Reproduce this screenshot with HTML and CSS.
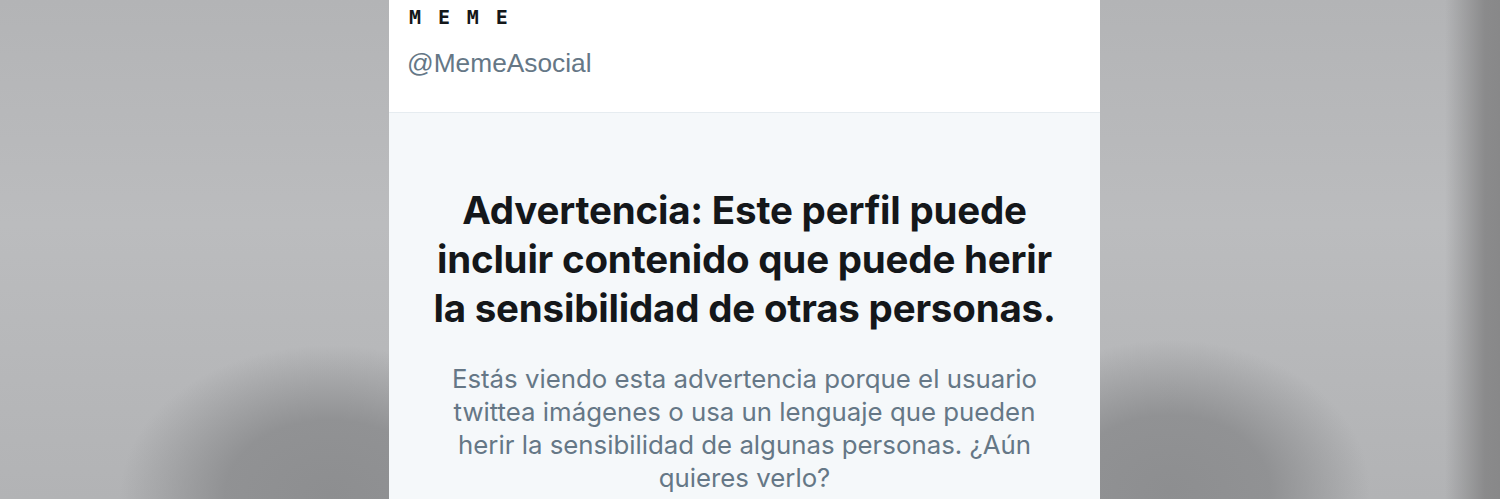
FILE: index.html
```html
<!DOCTYPE html>
<html lang="es">
<head>
<meta charset="utf-8">
<title>MEME</title>
<link rel="stylesheet" href="styles.css">
</head>
<body>
<div class="stage">
  <main class="card">
    <header class="profile">
      <div class="name">M E M E</div>
      <div class="handle">@MemeAsocial</div>
    </header>
    <section class="warning">
      <h1 class="title">Advertencia: Este perfil puede incluir contenido que puede herir la sensibilidad de otras personas.</h1>
      <p class="text">Estás viendo esta advertencia porque el usuario twittea imágenes o usa un lenguaje que pueden herir la sensibilidad de algunas personas. ¿Aún quieres verlo?</p>
    </section>
  </main>
</div>
</body>
</html>
```
FILE: styles.css
```css
html, body {
  margin: 0;
  padding: 0;
}
body {
  width: 1500px;
  height: 499px;
  overflow: hidden;
  background:
    linear-gradient(to right, rgba(136,136,137,0) 1445px, rgba(136,136,137,0.95) 1485px, rgba(136,136,137,1) 1500px),
    radial-gradient(ellipse 210px 150px at 330px 495px, rgba(141,142,144,1) 0%, rgba(141,142,144,0.9) 50%, rgba(141,142,144,0) 100%),
    radial-gradient(ellipse 200px 150px at 1170px 490px, rgba(141,142,144,1) 0%, rgba(141,142,144,0.9) 50%, rgba(141,142,144,0) 100%),
    linear-gradient(to bottom, #b3b4b6 0, #bbbcbe 45%, #b7b8ba 70%, #b2b3b5 100%);
  font-family: "Inter", "Liberation Sans", sans-serif;
}
.stage {
  display: flex;
  padding-left: 389px;
  height: 499px;
}
.card {
  width: 711px;
  display: flex;
  flex-direction: column;
  background: #f5f8fa;
}
.profile {
  background: #ffffff;
  height: 113px;
  box-sizing: border-box;
  border-bottom: 1px solid #e6ecf0;
  padding: 5px 0 0 20px;
}
.name {
  font-family: "DejaVu Sans Mono", monospace;
  font-weight: bold;
  font-size: 20px;
  line-height: 24px;
  letter-spacing: 2.4px;
  color: #14171a;
}
.handle {
  margin-top: 19px;
  font-family: "Liberation Sans", "Helvetica", sans-serif;
  font-size: 26.3px;
  line-height: 30px;
  color: #657786;
  margin-left: -2px;
}
.warning {
  padding: 73px 0 0;
  display: flex;
  flex-direction: column;
  align-items: center;
  text-align: center;
}
.title {
  margin: 0;
  width: 640px;
  font-family: "Inter", sans-serif;
  font-weight: 700;
  font-size: 38.5px;
  line-height: 49px;
  color: #14171a;
  letter-spacing: -0.2px;
}
.text {
  margin: 29px 0 0;
  width: 610px;
  font-family: "Inter", sans-serif;
  font-size: 25.8px;
  line-height: 33px;
  color: #657786;
}
```
